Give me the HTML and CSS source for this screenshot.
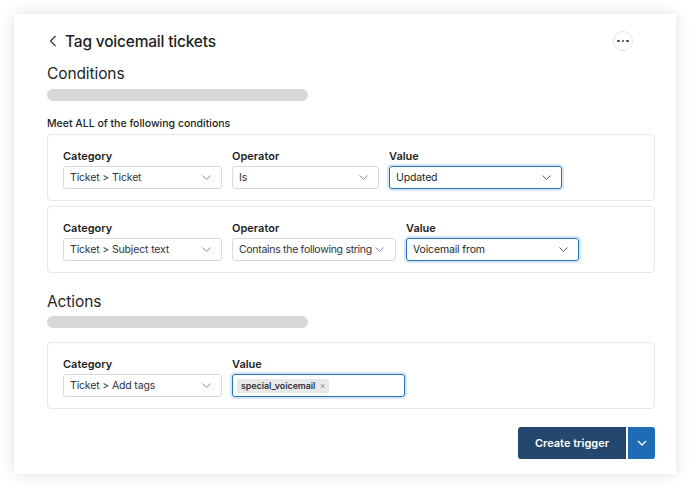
FILE: index.html
```html
<!DOCTYPE html>
<html>
<head>
<meta charset="utf-8">
<link rel="stylesheet" href="styles.css">
</head>
<body>
<div class="card">
  <div class="header">
    <div class="title-wrap">
      <svg class="back" width="8" height="12" viewBox="0 0 8 12"><path d="M6.5 1 L1.5 6 L6.5 11" fill="none" stroke="#333" stroke-width="1.2"/></svg>
      <h1 class="title">Tag voicemail tickets</h1>
    </div>
    <div class="more"><span></span><span></span><span></span></div>
  </div>

  <h2 class="section">Conditions</h2>
  <div class="bar"></div>
  <p class="meet">Meet ALL of the following conditions</p>

  <div class="box">
    <div class="field">
      <div class="label">Category</div>
      <div class="select w159"><span>Ticket &gt; Ticket</span><svg class="chev" width="9" height="5" viewBox="0 0 9 5"><path d="M0.5 0.5 L4.5 4.3 L8.5 0.5" fill="none" stroke="#8a8f95" stroke-width="1"/></svg></div>
    </div>
    <div class="field">
      <div class="label">Operator</div>
      <div class="select w147"><span>Is</span><svg class="chev" width="9" height="5" viewBox="0 0 9 5"><path d="M0.5 0.5 L4.5 4.3 L8.5 0.5" fill="none" stroke="#8a8f95" stroke-width="1"/></svg></div>
    </div>
    <div class="field">
      <div class="label">Value</div>
      <div class="select focus w173"><span>Updated</span><svg class="chev" width="9" height="5" viewBox="0 0 9 5"><path d="M0.5 0.5 L4.5 4.3 L8.5 0.5" fill="none" stroke="#555b62" stroke-width="1"/></svg></div>
    </div>
  </div>

  <div class="box second">
    <div class="field">
      <div class="label">Category</div>
      <div class="select w159"><span>Ticket &gt; Subject text</span><svg class="chev" width="9" height="5" viewBox="0 0 9 5"><path d="M0.5 0.5 L4.5 4.3 L8.5 0.5" fill="none" stroke="#8a8f95" stroke-width="1"/></svg></div>
    </div>
    <div class="field">
      <div class="label">Operator</div>
      <div class="select w164 tight"><span>Contains the following string</span><svg class="chev" width="9" height="5" viewBox="0 0 9 5"><path d="M0.5 0.5 L4.5 4.3 L8.5 0.5" fill="none" stroke="#8a8f95" stroke-width="1"/></svg></div>
    </div>
    <div class="field">
      <div class="label">Value</div>
      <div class="select focus w173"><span>Voicemail from</span><svg class="chev" width="9" height="5" viewBox="0 0 9 5"><path d="M0.5 0.5 L4.5 4.3 L8.5 0.5" fill="none" stroke="#555b62" stroke-width="1"/></svg></div>
    </div>
  </div>

  <h2 class="section actions">Actions</h2>
  <div class="bar bar2"></div>

  <div class="box action-box">
    <div class="field">
      <div class="label">Category</div>
      <div class="select w159"><span>Ticket &gt; Add tags</span><svg class="chev" width="9" height="5" viewBox="0 0 9 5"><path d="M0.5 0.5 L4.5 4.3 L8.5 0.5" fill="none" stroke="#8a8f95" stroke-width="1"/></svg></div>
    </div>
    <div class="field">
      <div class="label">Value</div>
      <div class="select focus tags w173"><span class="tag">special_voicemail <span class="x">×</span></span></div>
    </div>
  </div>

  <div class="footer">
    <button class="primary">Create trigger</button>
    <button class="split"><svg width="10" height="6" viewBox="0 0 10 6"><path d="M1 1 L5 5 L9 1" fill="none" stroke="#fff" stroke-width="1.3"/></svg></button>
  </div>
</div>
</body>
</html>
```

FILE: styles.css
```css
* { box-sizing: border-box; }
html, body { margin: 0; background: #ffffff; }
body {
  padding: 14px;
  font-family: Inter, "Liberation Sans", sans-serif;
  color: #1d1f22;
}
.card {
  width: 662px;
  height: 460px;
  background: #fff;
  box-shadow: 0 0 14px rgba(0,0,0,0.13);
  padding: 15px 21px 0 33px;
}
.header {
  display: flex;
  justify-content: space-between;
  align-items: center;
  height: 24px;
  padding-right: 22px;
}
.title-wrap { display: flex; align-items: center; }
.back { margin-left: 2px; margin-right: 8px; }
.title {
  margin: 0;
  font-size: 15.5px;
  font-weight: 500;
  letter-spacing: -0.2px;
}
.more {
  width: 20px; height: 20px;
  border: 1px solid #e3e5e8;
  border-radius: 50%;
  display: flex;
  align-items: center;
  justify-content: center;
  gap: 2px;
}
.more span {
  width: 2.5px; height: 2.5px;
  border-radius: 50%;
  background: #3c4048;
}
.section {
  margin: 10px 0 0;
  font-size: 15.5px;
  font-weight: 400;
  line-height: 22px;
  letter-spacing: -0.1px;
}
.bar {
  margin-top: 4px;
  width: 261px;
  height: 12px;
  border-radius: 6px;
  background: #d8d8d8;
}
.bar2 { margin-top: 3px; }
.meet {
  margin: 16px 0 0;
  font-size: 10.5px;
  font-weight: 500;
  line-height: 14px;
}
.box {
  margin-top: 3px;
  border: 1px solid #e6e8eb;
  border-radius: 4px;
  height: 67px;
  padding: 14px 15px 0;
  display: flex;
  gap: 10px;
}
.box.second { margin-top: 5px; }
.label {
  font-size: 11px;
  font-weight: 600;
  line-height: 14px;
  height: 17px;
}
.select {
  height: 23px;
  border: 1px solid #d8dcde;
  border-radius: 3px;
  display: flex;
  align-items: center;
  justify-content: space-between;
  padding: 0 10px 0 6px;
  font-size: 10.5px;
  letter-spacing: -0.15px;
  color: #2f3339;
  white-space: nowrap;
}
.select.tight { letter-spacing: -0.3px; padding-right: 11px; }
.select.focus {
  border: 1.5px solid #1f73b7;
  box-shadow: 0 0 0 2px rgba(31,115,183,0.18);
  color: #1d1f22;
}
.w159 { width: 159px; }
.w147 { width: 147px; }
.w164 { width: 164px; }
.w173 { width: 173px; }
.chev { flex: none; }
.select.tags { padding-left: 4px; justify-content: flex-start; }
.tag {
  background: #e6e8ea;
  border-radius: 2px;
  font-size: 8.8px;
  font-weight: 600;
  padding: 1px 4px;
  line-height: 12px;
  letter-spacing: 0;
  color: #2f3339;
}
.tag .x { color: #8a8f95; font-weight: 400; margin-left: 2px; }
.actions { margin-top: 18px; }
.action-box { margin-top: 14px; }
.footer {
  margin-top: 18px;
  display: flex;
  justify-content: flex-end;
  gap: 2px;
}
button {
  border: none;
  font-family: Inter, "Liberation Sans", sans-serif;
  color: #fff;
  border-radius: 3px;
  height: 32px;
}
.primary {
  width: 108px;
  background: #23476e;
  font-size: 11px;
  font-weight: 600;
  border-radius: 3px 0 0 3px;
}
.split {
  width: 27px;
  background: #1f6cb4;
  display: flex;
  align-items: center;
  justify-content: center;
  border-radius: 0 3px 3px 0;
}
```
